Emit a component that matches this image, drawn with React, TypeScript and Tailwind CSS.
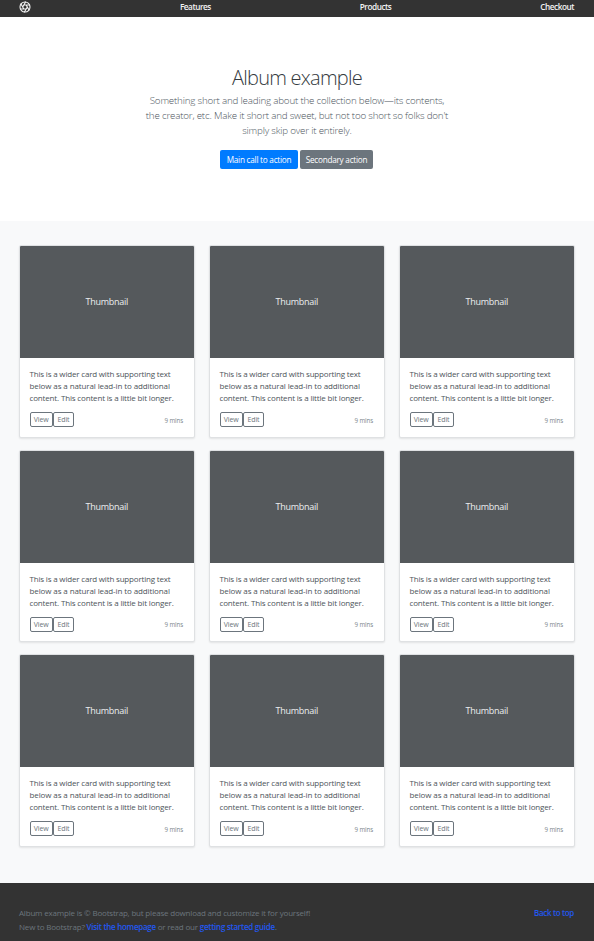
import React from 'react';

const lines = [
  { text: 'This is a wider card with supporting text', tracking: 'tracking-[-0.18px]' },
  { text: 'below as a natural lead-in to additional', tracking: 'tracking-[-0.11px]' },
  { text: 'content. This content is a little bit longer.', tracking: 'tracking-[-0.16px]' },
];

function Aperture() {
  return (
    <svg className="h-3 w-3" viewBox="0 0 24 24" fill="none" stroke="currentColor" strokeWidth="2.2" strokeLinecap="round">
      <circle cx="12" cy="12" r="10" />
      <path d="M14.31 8l5.74 9.94M9.69 8h11.48M7.38 12l5.74-9.94M9.69 16L3.95 6.06M14.31 16H2.83M16.62 12l-5.74 9.94" />
    </svg>
  );
}

function Card() {
  return (
    <article className="h-[192.5px] overflow-hidden rounded-[2px] border border-[#dfe1e3] bg-white shadow-[0_1px_2px_rgba(0,0,0,0.09)]">
      <div className="flex h-[112px] items-center justify-center bg-[#55595c] text-[9px] tracking-[-0.25px] font-medium text-[#eceeef]">
        Thumbnail
      </div>
      <div className="px-[9.5px] pt-[10.3px]">
        <p className="text-[8px] leading-3 text-[#4d545a]">
          {lines.map((line) => (
            <span key={line.text} className={`block whitespace-nowrap ${line.tracking}`}>{line.text}</span>
          ))}
        </p>
        <div className="mt-2 flex items-center justify-between">
          <div className="flex text-[7px] leading-[14px] tracking-[-0.1px] text-[#6c757d]">
            <button className="h-[15px] w-[23.5px] rounded-[2px] border border-[#6c757d]">View</button>
            <button className="h-[15px] w-[21px] rounded-[2px] border border-[#6c757d]">Edit</button>
          </div>
          <small className="mr-px pt-px text-[6.2px] tracking-[-0.12px] text-[#7c848b]">9 mins</small>
        </div>
      </div>
    </article>
  );
}

export default function App() {
  return (
    <div className="h-[941px] overflow-hidden bg-white font-['Open_Sans','Noto_Sans',sans-serif]">
      <header className="flex h-[17px] items-start justify-between bg-[#333] pl-[19px] pr-5 pt-px text-[8.2px] font-semibold leading-3 tracking-[-0.45px] text-[#f4f4f4]">
        <Aperture />
        <a>Features</a>
        <a>Products</a>
        <a>Checkout</a>
      </header>
      <main>
        <section className="flex h-[204px] flex-col items-center pt-[49px] text-center">
          <h1 className="text-[20px] font-light leading-6 tracking-[-0.75px] text-[#343a40]">Album example</h1>
          <p className="mt-[3px] whitespace-nowrap text-[9.8px] font-light leading-[15px] tracking-[-0.2px] text-[#4d565e]">
            Something short and leading about the collection below—its contents,<br />
            the creator, etc. Make it short and sweet, but not too short so folks don't<br />
            simply skip over it entirely.
          </p>
          <div className="mr-px mt-[12px] flex gap-0.5 text-[8.2px] font-medium leading-[19px] tracking-[-0.24px] text-white">
            <button className="h-[19px] w-[78px] rounded-[2px] bg-[#007bff]">Main call to action</button>
            <button className="h-[19px] w-[73px] rounded-[2px] bg-[#6c757d]">Secondary action</button>
          </div>
        </section>
        <section className="h-[662px] bg-[#f8f9fa] pl-[19px] pr-[19.5px] pt-6">
          <div className="grid grid-cols-3 gap-x-[14.5px] gap-y-[12px]">
            {Array.from({ length: 9 }, (_, i) => <Card key={i} />)}
          </div>
        </section>
      </main>
      <footer className="flex h-[58px] justify-between bg-[#333] pl-[19px] pr-5 pt-[23px] text-[8px] leading-[14px] tracking-[-0.19px] text-[#6c757d]">
        <div>
          <p>Album example is © Bootstrap, but please download and customize it for yourself!</p>
          <p>New to Bootstrap? <a className="font-semibold tracking-[-0.29px] text-[#2257f0]">Visit the homepage</a> or read our <a className="font-semibold tracking-[-0.26px] text-[#2257f0]">getting started guide</a>.</p>
        </div>
        <a className="font-semibold tracking-[-0.34px] text-[#2257f0]">Back to top</a>
      </footer>
    </div>
  );
}
